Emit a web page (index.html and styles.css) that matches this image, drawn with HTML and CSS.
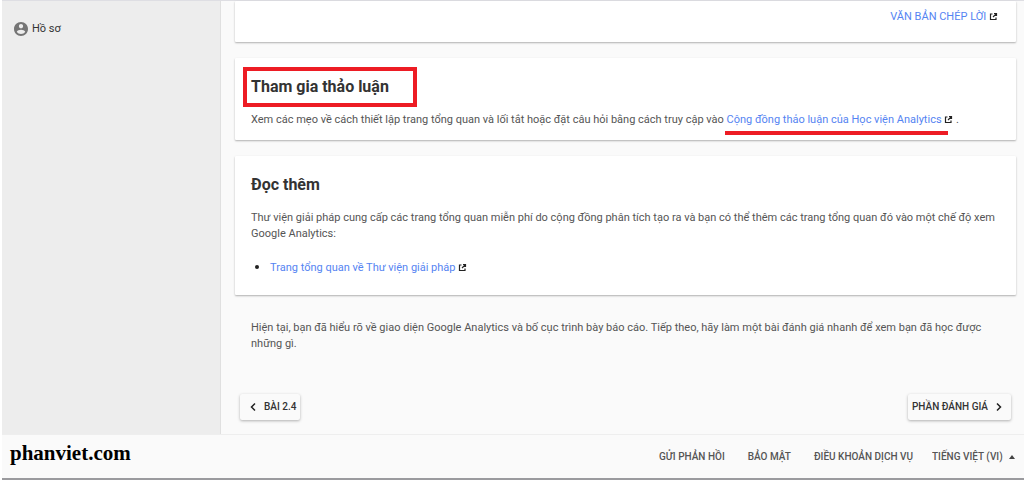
FILE: index.html
```html
<!DOCTYPE html>
<html lang="vi">
<head>
<meta charset="utf-8">
<meta name="viewport" content="width=device-width, initial-scale=1">
<title>Học viện Analytics</title>
<link rel="stylesheet" href="styles.css">
</head>
<body>
<svg class="defs" aria-hidden="true">
  <symbol id="external" viewBox="0 0 9 9">
    <path d="M3.500 2H1.500V7.500H7V5.500M5 1.500H7.500V4M7.500 1.500L4 5" fill="none" stroke="#222" stroke-width="1.2"/>
  </symbol>
</svg>
<div class="page">
  <div class="body">
    <nav class="sidebar">
      <a class="profile" href="#profile">
        <svg class="profile-icon" viewBox="2 2 20 20" aria-hidden="true"><path fill="#757575" d="M12 2C6.48 2 2 6.48 2 12s4.480 10 10 10 10-4.480 10-10S17.520 2 12 2zm0 3c1.660 0 3 1.340 3 3s-1.340 3-3 3-3-1.340-3-3 1.340-3 3-3zm0 14.200c-2.500 0-4.710-1.280-6-3.220.03-1.990 4-3.080 6-3.080 1.990 0 5.970 1.090 6 3.080-1.290 1.940-3.500 3.220-6 3.220z"/></svg>
        <span>Hồ sơ</span>
      </a>
    </nav>
    <main class="content">
      <section class="card card-transcript">
        <a class="link" href="#transcript">VĂN BẢN CHÉP LỜI</a>
        <svg class="external" aria-hidden="true"><use href="#external"/></svg>
      </section>
      <section class="card">
        <h2 class="title"><span class="marked">Tham gia thảo luận</span></h2>
        <p class="text">Xem các mẹo về cách thiết lập trang tổng quan và lối tắt hoặc đặt câu hỏi bằng cách truy cập vào <a class="link underlined" href="#community">Cộng đồng thảo luận của Học viện Analytics</a> <svg class="external" aria-hidden="true"><use href="#external"/></svg> .</p>
      </section>
      <section class="card card-more">
        <h2 class="title">Đọc thêm</h2>
        <p class="text">Thư viện giải pháp cung cấp các trang tổng quan miễn phí do cộng đồng phân tích tạo ra và bạn có thể thêm các trang tổng quan đó vào một chế độ xem Google Analytics:</p>
        <ul class="list">
          <li><a class="link" href="#gallery">Trang tổng quan về Thư viện giải pháp</a> <svg class="external" aria-hidden="true"><use href="#external"/></svg></li>
        </ul>
      </section>
      <p class="text closing">Hiện tại, bạn đã hiểu rõ về giao diện Google Analytics và bố cục trình bày báo cáo. Tiếp theo, hãy làm một bài đánh giá nhanh để xem bạn đã học được những gì.</p>
      <div class="pager">
        <button class="pager-button" type="button">
          <svg class="chevron" viewBox="0 0 6 10" aria-hidden="true"><path d="M5 1.500L1.500 5L5 8.500"/></svg>
          <span>BÀI 2.4</span>
        </button>
        <button class="pager-button pager-next" type="button">
          <span>PHẦN ĐÁNH GIÁ</span>
          <svg class="chevron" viewBox="0 0 6 10" aria-hidden="true"><path d="M1 1.500L4.500 5L1 8.500"/></svg>
        </button>
      </div>
    </main>
  </div>
  <footer class="footer">
    <div class="brand">phanviet.com</div>
    <div class="footer-links">
      <a href="#feedback">GỬI PHẢN HỒI</a>
      <a href="#privacy">BẢO MẬT</a>
      <a href="#terms">ĐIỀU KHOẢN DỊCH VỤ</a>
      <div class="language">
        <select class="language-select" aria-label="Ngôn ngữ"><option>TIẾNG VIỆT (VI)</option></select>
        <svg class="caret" viewBox="0 0 8 4" aria-hidden="true"><path d="M1 4L4 0L7 4Z" fill="#444"/></svg>
      </div>
    </div>
  </footer>
</div>
</body>
</html>
```
FILE: styles.css
```css
* { box-sizing: border-box; }

body {
  margin: 0;
  background: #fff;
  font-family: Roboto, "Liberation Sans", sans-serif;
  font-size: 11px;
  line-height: 16px;
  color: #555;
}

a { color: inherit; text-decoration: none; }

.defs { position: absolute; width: 0; height: 0; }

.page {
  display: flex;
  flex-direction: column;
  min-height: calc(100vh - 1px);
  margin-left: 2px;
  border-top: 1px solid #dedee3;
  border-bottom: 2px solid #9a9a9e;
  background: #fafafa;
}

.body { display: flex; flex: 1; }

.sidebar {
  flex: 0 0 219px;
  padding: 20px 12px;
  background: #ededed;
  border-right: 1px solid #e0e0e0;
}

.profile { display: flex; align-items: center; gap: 4px; color: #333; }
.profile-icon { width: 14px; height: 14px; }

.content {
  flex: 1;
  min-width: 0;
  padding: 0 8px 12px 14px;
}

.card {
  margin-bottom: 16px;
  padding: 16px 16px 12px;
  background: #fff;
  border-radius: 1px;
  box-shadow: 0 1px 2px rgba(0, 0, 0, 0.3);
}

.card-transcript { padding: 8px 18px 17px; text-align: right; }
.card-more { padding-bottom: 19px; }

.title {
  margin: 0 0 12px;
  font-size: 16px;
  line-height: 26px;
  font-weight: 700;
  color: #333;
}

.marked {
  display: inline-block;
  padding: 0 24px 0 4px;
  margin: -7px 0 -7px -8px;
  border: 4px solid #ed1c24;
  line-height: 32px;
}

.text { margin: 0; }
.link { color: #5584f2; }

.external {
  width: 9px;
  height: 9px;
  vertical-align: -1px;
}

.underlined {
  padding: 0 6px 5px 2px;
  margin: 0 -6px 0 -2px;
  border-bottom: 4px solid #ed1c24;
}

.list { margin: 16px 0 0; padding-left: 19px; }
.list li::marker { color: #222; font-size: 14px; }

.closing { padding: 9px 16px 0; }

.pager {
  display: flex;
  justify-content: space-between;
  margin-top: 42px;
  padding: 0 5px 0 5px;
}

.pager-button {
  display: flex;
  align-items: center;
  gap: 8px;
  height: 26px;
  padding: 0 4px 0 10px;
  border: 0;
  border-radius: 2px;
  background: #fafafa;
  box-shadow: 0 1px 3px rgba(0, 0, 0, 0.3);
  font: 500 10px/16px Roboto, "Liberation Sans", sans-serif;
  color: #333;
}

.pager-next { padding: 0 9px 0 4px; }

.chevron {
  width: 6px;
  height: 10px;
  fill: none;
  stroke: #222;
  stroke-width: 1.5;
}

.footer {
  display: flex;
  align-items: center;
  justify-content: space-between;
  height: 44px;
  padding: 0 8px;
  border-top: 1px solid #eee;
}

.brand {
  padding-bottom: 8px;
  font: bold 21px/24px "Liberation Serif", serif;
  color: #000;
}

.footer-links {
  display: flex;
  align-items: center;
  gap: 23px;
  font-size: 10px;
  font-weight: 500;
  color: #555;
}

.language { display: flex; align-items: center; gap: 5px; margin-left: -4px; }

.language-select {
  appearance: none;
  padding: 0;
  border: 0;
  background: none;
  font: inherit;
  color: inherit;
}

.caret { width: 8px; height: 4px; }
```
